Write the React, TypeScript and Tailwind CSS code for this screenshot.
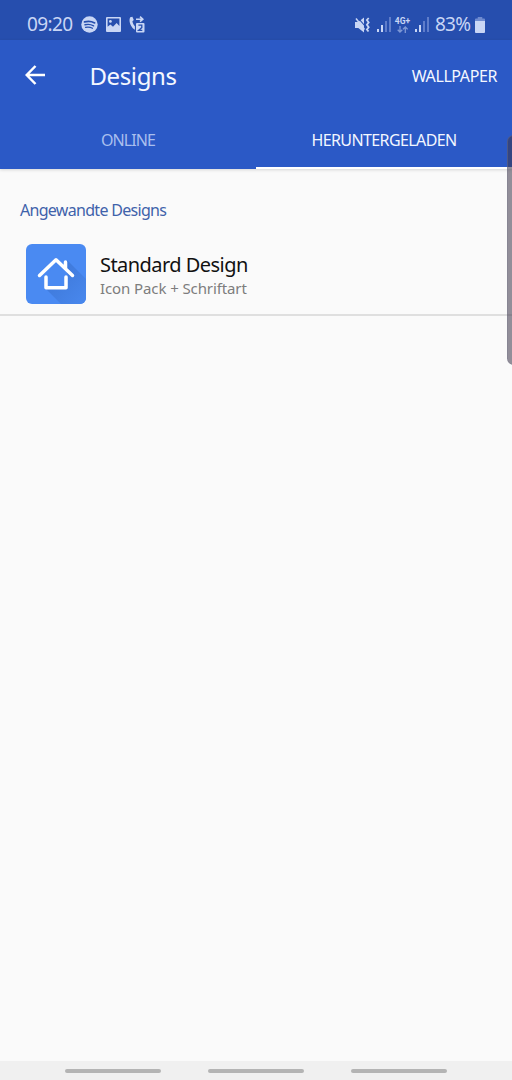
import type { ReactNode } from 'react';

interface TabProps {
  children: ReactNode;
  active?: boolean;
}

function StatusBar() {
  return (
    <div className="flex h-10 items-center justify-between bg-[#264eae] pt-[9px] pr-[27px] pl-[27px] text-[#c9d6f5]">
      <div className="flex items-center">
        <span className="w-[54px] text-[19px] leading-[31px] tracking-[-0.6px] whitespace-nowrap">09:20</span>
        {/* Spotify */}
        <svg className="mr-2" width="17" height="17" viewBox="0 0 17 17" fill="none">
          <circle cx="8.5" cy="8.5" r="8.2" fill="currentColor" />
          <g stroke="#264eae" strokeLinecap="round">
            <path d="M3.5 5.9c3.4-1 7.2-.6 10.2 1" strokeWidth="1.7" />
            <path d="M4 8.8c3-.8 6-.4 8.6 1" strokeWidth="1.4" />
            <path d="M4.5 11.4c2.5-.6 4.8-.3 7 .9" strokeWidth="1.2" />
          </g>
        </svg>
        {/* Picture */}
        <svg className="mr-2" width="15" height="15" viewBox="0 0 15 15">
          <path
            fill="currentColor"
            fillRule="evenodd"
            d="M1 0h13a1 1 0 0 1 1 1v13a1 1 0 0 1-1 1H1a1 1 0 0 1-1-1V1a1 1 0 0 1 1-1Zm.6 1.6v8.2l2.8-2.3 2.6 2.2 3.6-3.8 2.8 3V1.6Z"
          />
          <circle cx="4.4" cy="4.4" r="1.4" fill="currentColor" />
        </svg>
        {/* Call forwarding, SIM 2 */}
        <svg width="16" height="17" viewBox="0 0 16 17">
          <path
            fill="currentColor"
            d="M1.2 1.2 3.4.8l1.4 3.1-1.4 1.4c.4 2 1.2 3.6 2.5 5v3.4C2.2 11.8-.9 5.2 1.2 1.2Z"
          />
          <path d="M7 3.2h6.5M11 .7l2.8 2.5L11 5.7" fill="none" stroke="currentColor" strokeWidth="1.6" />
          <rect x="7" y="7" width="8.5" height="9.5" rx="1" fill="currentColor" />
          <path d="M9.4 9.2h3.4v2.4l-3.1 2.7h3.6" fill="none" stroke="#264eae" strokeWidth="1.3" />
        </svg>
      </div>
      <div className="flex items-center">
        {/* Muted, vibrate */}
        <svg className="mr-[7px]" width="15" height="16" viewBox="0 0 15 16">
          <path d="M0 5h3.3L9 .5v15L3.3 11H0Z" fill="currentColor" />
          <path d="M3 .8 10 9" stroke="#264eae" strokeWidth="1.1" />
          <path d="m1 1.5 8.5 11" stroke="currentColor" strokeWidth="1.5" />
          <path
            d="m13.7 1-1.8 2 1.8 2.4-1.8 2.4 1.8 2.4-1.8 2.3 1.6 2"
            fill="none"
            stroke="currentColor"
            strokeWidth="1.8"
          />
        </svg>
        <Signal />
        <div className="mr-[5px] ml-1 flex w-[15px] flex-col items-center">
          <span className="font-['Roboto',sans-serif] text-[8.5px] leading-[9px] font-bold whitespace-nowrap">4G+</span>
          <svg width="11" height="7" viewBox="0 0 11 7" fill="none" stroke="#7f99d6" strokeWidth="1.3">
            <path d="M3 0v6M.7 3.7 3 6l2.3-2.3M8.3 7V1M6 3.3 8.3 1l2.3 2.3" />
          </svg>
        </div>
        <Signal />
        <span className="ml-[6px] w-[40px] text-[19px] leading-[31px] tracking-[-0.8px] whitespace-nowrap">83%</span>
        <svg width="10" height="16" viewBox="0 0 11 16" preserveAspectRatio="none">
          <path d="M3 0h5v1.5h2a1 1 0 0 1 1 1V4H0V2.5a1 1 0 0 1 1-1h2Z" fill="#6f8bd0" />
          <path d="M0 4h11v11a1 1 0 0 1-1 1H1a1 1 0 0 1-1-1Z" fill="currentColor" />
        </svg>
      </div>
    </div>
  );
}

function Signal() {
  return (
    <svg width="14" height="15" viewBox="0 0 14 15">
      <path d="M0 12h2v3H0ZM4 8h2v7H4Z" fill="currentColor" />
      <path d="M8 4h2v11H8ZM12 0h2v15h-2Z" fill="#5f7dca" />
    </svg>
  );
}

function Tab({ children, active }: TabProps) {
  return (
    <button
      className={`flex h-[59px] flex-1 justify-center border-b-2 pt-[18px] text-base leading-6 whitespace-nowrap ${
        active ? 'border-white tracking-[-0.6px] text-[#f2f6ff]' : 'border-[#2b59c6] tracking-[-0.9px] text-[#a9bfee]'
      }`}
    >
      {children}
    </button>
  );
}

function DesignIcon() {
  return (
    <svg width="60" height="60" viewBox="0 0 60 60">
      <defs>
        <clipPath id="tile">
          <rect width="60" height="60" rx="6" />
        </clipPath>
        <linearGradient id="shade" x1="0.3" y1="0.3" x2="1" y2="1">
          <stop offset="0" stopColor="#3f7adb" />
          <stop offset="1" stopColor="#4988ee" />
        </linearGradient>
      </defs>
      <g clipPath="url(#tile)">
        <rect width="60" height="60" fill="#4a8af2" />
        <path d="M19 44 41 32 41 16 60 35v25H35Z" fill="url(#shade)" />
        <path d="M21.5 32 30 18l12 13v11H21.5Z" fill="#4a8af2" />
      </g>
      <path
        d="M13.5 31.5 30 15.8 46.500 31.500M39.500 24v-6M20 33v10.700h20V33"
        fill="none"
        stroke="#fff"
        strokeWidth="3.5"
        strokeLinecap="round"
        strokeLinejoin="round"
      />
    </svg>
  );
}

export default function App() {
  return (
    <div className="relative flex h-[1080px] w-[512px] flex-col overflow-hidden bg-[#fafafa] font-['Noto_Sans',sans-serif]">
      <StatusBar />

      <header className="bg-[#2b59c6] shadow-[0_1px_3px_rgba(0,0,0,0.15)]">
        <div className="flex h-[70px] items-center pr-[15px] pl-[25px] text-[#f4f7ff]">
          <svg width="20" height="20" viewBox="0 0 20 20" fill="none" stroke="white" strokeWidth="2.5">
            <path d="M20 10H2M10.5 1 1.7 10l8.8 9" />
          </svg>
          <h1 className="ml-[44.5px] pt-px text-2xl leading-8 tracking-[-0.4px]">Designs</h1>
          <button className="ml-auto pt-px text-base leading-6 tracking-[-0.4px]">WALLPAPER</button>
        </div>
        <nav className="flex">
          <Tab>ONLINE</Tab>
          <Tab active>HERUNTERGELADEN</Tab>
        </nav>
      </header>

      <main className="flex-1">
        <h2 className="pt-[29px] pl-5 text-base leading-6 tracking-[-0.7px] text-[#3f62aa]">Angewandte Designs</h2>
        <div className="mt-[22px] flex h-[72px] border-b-2 border-[#dfdfdf] pl-[26px]">
          <DesignIcon />
          <div className="ml-[14px] pt-[7px] whitespace-nowrap">
            <p className="text-xl leading-7 tracking-[-0.55px] text-[#111]">Standard Design</p>
            <p className="text-[15px] leading-[19px] tracking-[-0.1px] text-[#7d7d7d]">Icon Pack + Schriftart</p>
          </div>
        </div>
      </main>

      {/* Edge panel handle */}
      <div className="absolute top-[135px] -right-2 h-[230px] w-[13px] rounded-lg border border-[#77778a]/40 bg-[#3c3448]/55" />

      <footer className="flex h-[19px] justify-center gap-[47px] bg-[#f0f0f0] pt-[8px]">
        <span className="h-1 w-24 rounded-full bg-[#b4b4b4]" />
        <span className="h-1 w-24 rounded-full bg-[#b4b4b4]" />
        <span className="h-1 w-24 rounded-full bg-[#b4b4b4]" />
      </footer>
    </div>
  );
}
